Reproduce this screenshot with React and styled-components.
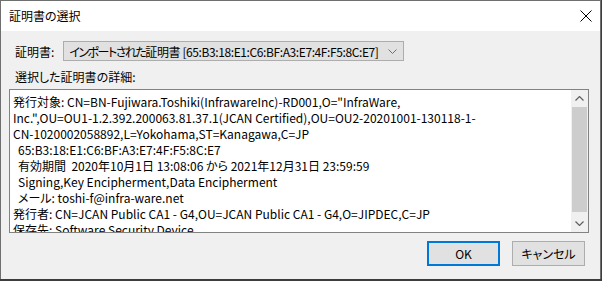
import React from 'react'
import styled, { createGlobalStyle } from 'styled-components'

const Global = createGlobalStyle`
  html, body {
    margin: 0;
    padding: 0;
    background: #3c3c3c;
  }
  body {
    font-family: "Noto Sans CJK JP", "Open Sans", sans-serif;
    font-size: 12px;
    font-feature-settings: "palt";
    color: #000;
  }
`

const Window = styled.div`
  width: 599px;
  height: 278px;
  border: 1px solid #6f6f6f;
  border-bottom: none;
  background: #f0f0f0;
  display: flex;
  flex-direction: column;
`

const TitleBar = styled.div`
  height: 30px;
  background: #fff;
  display: flex;
  align-items: center;
  justify-content: space-between;
  padding: 0 8px 0 8px;
`

const Title = styled.div`
  margin-top: -1px;
`

const CloseBtn = styled.div`
  display: flex;
  align-items: center;
`

const Body = styled.div`
  flex: 1;
  display: flex;
  flex-direction: column;
  padding: 10px 10px 0 8px;
`

const Row = styled.div`
  display: flex;
  align-items: center;
  gap: 9px;
  padding-left: 6px;
`

const Label = styled.div`
  white-space: nowrap;
  padding-left: ${p => p.$indent || 0}px;
  margin-top: ${p => p.$top || 0}px;
`

const Select = styled.div`
  width: 334px;
  height: 18px;
  border: 1px solid #adadad;
  background: #e1e1e1;
  display: flex;
  align-items: center;
  justify-content: space-between;
  padding: 0 0 0 5px;
  white-space: nowrap;
`

const SelectText = styled.span`
  letter-spacing: -0.4px;
`

const Kana = styled.span`
  letter-spacing: ${p => p.$squeeze || -1.5}px;
`

const Chevron = styled.div`
  width: 21px;
  display: flex;
  justify-content: center;
`

const Details = styled.div`
  margin-top: 4px;
  width: 578px;
  height: 142px;
  border: 1px solid #828282;
  background: #fff;
  display: flex;
  overflow: hidden;
`

const TextArea = styled.div`
  flex: 1;
  padding: 4px 0 0 3px;
  overflow: hidden;
`

const Line = styled.div`
  height: 16px;
  line-height: 16px;
  white-space: pre;
  padding-left: ${p => (p.$indent ? 5 : 0)}px;
`

const ScrollBar = styled.div`
  width: 17px;
  background: #f0f0f0;
  display: flex;
  flex-direction: column;
`

const Arrow = styled.div`
  height: 17px;
  display: flex;
  align-items: center;
  justify-content: center;
`

const Track = styled.div`
  flex: 1;
  padding: 0 1px;
  display: flex;
`

const Thumb = styled.div`
  flex: 1;
  background: #cdcdcd;
  margin-bottom: 3px;
`

const Buttons = styled.div`
  display: flex;
  justify-content: flex-end;
  gap: 12px;
  margin-top: 8px;
  padding-right: 5px;
`

const Button = styled.div`
  width: ${p => (p.$primary ? 69 : 71)}px;
  height: ${p => (p.$primary ? 21 : 23)}px;
  border: ${p => (p.$primary ? '2px solid #0078d7' : '1px solid #adadad')};
  background: #e1e1e1;
  display: flex;
  align-items: center;
  justify-content: center;
`

const lines = [
  { t: '発行対象: CN=BN-Fujiwara.Toshiki(InfrawareInc)-RD001,O="InfraWare,' },
  { t: 'Inc.",OU=OU1-1.2.392.200063.81.37.1(JCAN Certified),OU=OU2-20201001-130118-1-' },
  { t: 'CN-1020002058892,L=Yokohama,ST=Kanagawa,C=JP' },
  { t: '65:B3:18:E1:C6:BF:A3:E7:4F:F5:8C:E7', indent: true },
  { t: '有効期間  2020年10月1日 13:08:06 から 2021年12月31日 23:59:59', indent: true },
  { t: 'Signing,Key Encipherment,Data Encipherment', indent: true },
  { t: 'メール: toshi-f@infra-ware.net', indent: true },
  { t: '発行者: CN=JCAN Public CA1 - G4,OU=JCAN Public CA1 - G4,O=JIPDEC,C=JP' },
  { t: '保存先: Software Security Device' },
]

export default function App() {
  return (
    <>
      <Global />
      <Window>
        <TitleBar>
          <Title>証明書の選択</Title>
          <CloseBtn>
            <svg width="12" height="12" viewBox="0 0 12 12">
              <path d="M0.5 0.5 L11.5 11.5 M11.5 0.5 L0.5 11.5" stroke="#000" strokeWidth="1" />
            </svg>
          </CloseBtn>
        </TitleBar>
        <Body>
          <Row>
            <Label>証明書:</Label>
            <Select>
              <SelectText>
                <Kana>インポートされた</Kana>証明書 [65:B3:18:E1:C6:BF:A3:E7:4F:F5:8C:E7]
              </SelectText>
              <Chevron>
                <svg width="9" height="5" viewBox="0 0 9 5">
                  <path d="M0.5 0.5 L4.5 4.5 L8.5 0.5" fill="none" stroke="#707070" strokeWidth="1" />
                </svg>
              </Chevron>
            </Select>
          </Row>
          <Label $indent={6} $top={7}>選択した証明書の詳細:</Label>
          <Details>
            <TextArea>
              {lines.map((l, i) => (
                <Line key={i} $indent={l.indent}>{l.t}</Line>
              ))}
            </TextArea>
            <ScrollBar>
              <Arrow>
                <svg width="9" height="5" viewBox="0 0 9 5">
                  <path d="M0.5 4.5 L4.5 0.5 L8.5 4.5" fill="none" stroke="#606060" strokeWidth="1.2" />
                </svg>
              </Arrow>
              <Track>
                <Thumb />
              </Track>
              <Arrow>
                <svg width="9" height="5" viewBox="0 0 9 5">
                  <path d="M0.5 0.5 L4.5 4.5 L8.5 0.5" fill="none" stroke="#606060" strokeWidth="1.2" />
                </svg>
              </Arrow>
            </ScrollBar>
          </Details>
          <Buttons>
            <Button $primary>OK</Button>
            <Button>キャンセル</Button>
          </Buttons>
        </Body>
      </Window>
    </>
  )
}
